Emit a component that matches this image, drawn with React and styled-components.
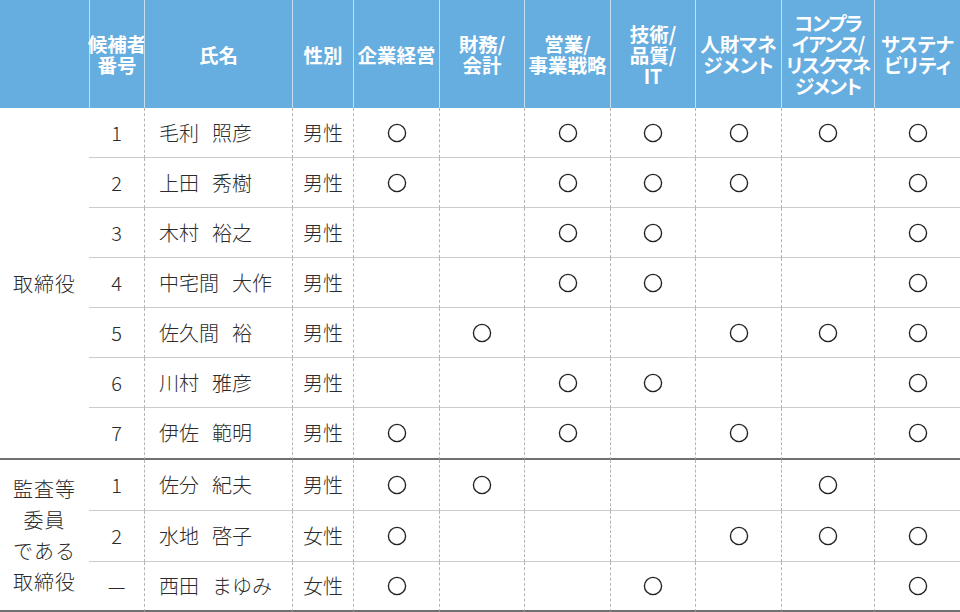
import React from "react";
import styled, { createGlobalStyle } from "styled-components";

const GlobalStyle = createGlobalStyle`
  * { box-sizing: border-box; }
  body {
    margin: 0;
    background: #fff;
    font-family: "Noto Sans CJK JP", "Noto Sans", sans-serif;
  }
`;

const Table = styled.div`
  display: grid;
  width: 960px;
  grid-template-columns: 89px 55px 148px 61px 86px 85px 86px 85px 86px 93px 86px;
  grid-template-rows: 108px repeat(6, 50px) 52px 51px 51px 50px;
`;

const HeadCell = styled.div`
  display: flex;
  align-items: center;
  justify-content: center;
  text-align: center;
  background: #66ade0;
  border-left: ${(p) => (p.$first ? "none" : "1px solid #c6def2")};
  color: #fff;
  font-weight: 700;
  font-size: 19.5px;
  line-height: 21px;
  letter-spacing: ${(p) => (p.$tight ? "-1.2px" : "0")};
  font-feature-settings: "palt";
  white-space: nowrap;
`;

const Cell = styled.div`
  display: flex;
  align-items: center;
  justify-content: ${(p) => (p.$left ? "flex-start" : "center")};
  padding-left: ${(p) => (p.$left ? "14px" : "0")};
  gap: 13px;
  border-bottom: ${(p) => (p.$last ? "2px solid #707070" : "1px solid #cccccc")};
  border-left: ${(p) => (p.$dashed ? "1px dashed #b4b4b4" : "none")};
  color: #2b2b2b;
  font-weight: 300;
  font-size: 20px;
  line-height: 1;
`;

const GroupCell = styled.div`
  grid-row: span ${(p) => p.$span};
  display: flex;
  align-items: center;
  justify-content: center;
  text-align: center;
  border-bottom: 2px solid #707070;
  color: #2b2b2b;
  font-weight: 300;
  font-size: 20px;
  letter-spacing: 1px;
  line-height: 31px;
`;

const Mark = () => (
  <svg width="20" height="20" viewBox="0 0 20 20">
    <circle cx="10" cy="10" r="8.6" fill="none" stroke="#222" strokeWidth="1.35" />
  </svg>
);

const headers = [
  [""],
  ["候補者", "番号"],
  ["氏名"],
  ["性別"],
  ["企業経営"],
  ["財務/", "会計"],
  ["営業/", "事業戦略"],
  ["技術/", "品質/", "IT"],
  ["人財マネ", "ジメント"],
  ["コンプラ", "イアンス/", "リスクマネ", "ジメント"],
  ["サステナ", "ビリティ"],
];

const groups = [
  {
    label: ["取締役"],
    rows: [
      ["1", "毛利", "照彦", "男性", "1011111"],
      ["2", "上田", "秀樹", "男性", "1011101"],
      ["3", "木村", "裕之", "男性", "0011001"],
      ["4", "中宅間", "大作", "男性", "0011001"],
      ["5", "佐久間", "裕", "男性", "0100111"],
      ["6", "川村", "雅彦", "男性", "0011001"],
      ["7", "伊佐", "範明", "男性", "1010101"],
    ],
  },
  {
    label: ["監査等", "委員", "である", "取締役"],
    rows: [
      ["1", "佐分", "紀夫", "男性", "1100010"],
      ["2", "水地", "啓子", "女性", "1000111"],
      ["—", "西田", "まゆみ", "女性", "1001001"],
    ],
  },
];

export default function App() {
  return (
    <>
      <GlobalStyle />
      <Table>
        {headers.map((lines, i) => (
          <HeadCell key={"h" + i} $first={i === 0} $tight={lines.length > 3}>
            <div>
              {lines.map((l, j) => (
                <div key={j}>{l}</div>
              ))}
            </div>
          </HeadCell>
        ))}
        {groups.map((g, gi) => (
          <React.Fragment key={"g" + gi}>
            <GroupCell $span={g.rows.length}>
              <div>
                {g.label.map((l, j) => (
                  <div key={j}>{l}</div>
                ))}
              </div>
            </GroupCell>
            {g.rows.map((r, ri) => {
              const last = ri === g.rows.length - 1;
              return (
                <React.Fragment key={"r" + ri}>
                  <Cell $last={last}>{r[0]}</Cell>
                  <Cell $last={last} $dashed $left>
                    <span>{r[1]}</span>
                    <span>{r[2]}</span>
                  </Cell>
                  <Cell $last={last} $dashed>
                    {r[3]}
                  </Cell>
                  {r[4].split("").map((v, k) => (
                    <Cell key={k} $last={last} $dashed>
                      {v === "1" ? <Mark /> : null}
                    </Cell>
                  ))}
                </React.Fragment>
              );
            })}
          </React.Fragment>
        ))}
      </Table>
    </>
  );
}
